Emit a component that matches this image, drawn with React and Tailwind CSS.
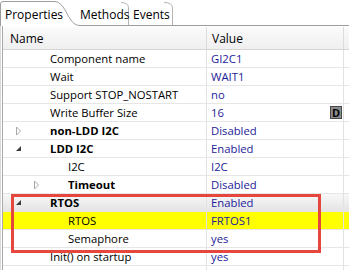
import React from 'react';

const rows = [
  { name: 'Component name', value: 'GI2C1', depth: 0 },
  { name: 'Wait', value: 'WAIT1', depth: 0 },
  { name: 'Support STOP_NOSTART', value: 'no', depth: 0 },
  { name: 'Write Buffer Size', value: '16', depth: 0, button: 'D' },
  { name: 'non-LDD I2C', value: 'Disabled', depth: 0, group: 'closed' },
  { name: 'LDD I2C', value: 'Enabled', depth: 0, group: 'open' },
  { name: 'I2C', value: 'I2C', depth: 1 },
  { name: 'Timeout', value: 'Disabled', depth: 1, group: 'closed' },
  { name: 'RTOS', value: 'Enabled', depth: 0, group: 'open', shade: true },
  { name: 'RTOS', value: 'FRTOS1', depth: 1, highlight: true },
  { name: 'Semaphore', value: 'yes', depth: 1 },
  { name: 'Init() on startup', value: 'yes', depth: 0 },
  { name: '', value: '', depth: 0 },
];

function Toggle({ state }) {
  if (state === 'open') {
    return (
      <svg width="7" height="7" viewBox="0 0 7 7">
        <path d="M6 1 L6 6 L1 6 Z" fill="#3c3c3c" />
      </svg>
    );
  }
  return (
    <svg width="7" height="10" viewBox="0 0 7 10">
      <path d="M1.5 1 L5.5 5 L1.5 9 Z" fill="none" stroke="#a8a8a8" strokeWidth="1" />
    </svg>
  );
}

function Row({ row }) {
  const indent = 47 + row.depth * 18;
  let bg = 'bg-white';
  if (row.highlight) bg = 'bg-[#ffff00]';
  if (row.shade) bg = 'bg-gradient-to-b from-[#f8f8f8] to-[#e4e4e4]';

  return (
    <div className={`flex h-[18px] border-b border-[#e6e6e6] ${bg}`}>
      <div className="w-[204px] shrink-0 border-r border-[#e2e2e2] relative flex items-center overflow-hidden">
        {row.group && (
          <span
            className="absolute top-0 h-full flex items-center"
            style={{ left: indent - 35 }}
          >
            <Toggle state={row.group} />
          </span>
        )}
        <span
          className={`whitespace-nowrap text-black ${row.group ? 'font-bold' : ''}`}
          style={{ paddingLeft: indent }}
        >
          {row.name}
        </span>
      </div>
      <div className="w-[137px] shrink-0 border-r border-[#e2e2e2] flex items-center justify-between pl-[4px] pr-[1px]">
        <span className="text-[#1d1b9a] whitespace-nowrap">{row.value}</span>
        {row.button && (
          <span className="w-[12px] h-[13px] bg-[#8c8c8c] border border-[#4a4a4a] flex items-center justify-center text-[11px] font-bold text-black leading-none">
            {row.button}
          </span>
        )}
      </div>
    </div>
  );
}

export default function App() {
  return (
    <div className="w-[349px] h-[270px] bg-white relative overflow-hidden text-[11.3px] leading-none font-['Segoe_UI','Open_Sans','Noto_Sans',sans-serif]">
      {/* Tabs */}
      <div className="relative h-[26px]">
        <svg className="absolute inset-0" width="349" height="26" viewBox="0 0 349 26">
          <path
            d="M0.5 26 L0.5 4 Q0.5 1.5 3 1.5 L54 1.5 C67 1.5 67 25.5 80 25.5 L349 25.5"
            fill="none"
            stroke="#9c9c9c"
          />
          <path d="M121 2.5 Q128.5 2.5 128.5 8 L128.5 25" fill="none" stroke="#b4b4b4" />
          <path d="M164 2.5 Q172.5 2.5 172.5 8 L172.5 25" fill="none" stroke="#b4b4b4" />
        </svg>
        <div className="relative grid grid-cols-[80px_53px_auto] h-full items-center pt-[4px] text-black text-[12px]">
          <span className="pl-[5px]">Properties</span>
          <span>Methods</span>
          <span>Events</span>
        </div>
      </div>

      {/* Table */}
      <div className="border-l border-[#dadada] h-[244px]">
        <div className="ml-[1px] border-l border-[#a9a9a9] h-full pt-[1px]">
          <div className="flex h-[23px] border-b border-[#d6d6d6] bg-gradient-to-b from-[#fbfbfb] to-[#efefef]">
            <div className="w-[204px] shrink-0 border-r border-[#dcdcdc] flex items-center pl-[7px] pt-[2px] text-[12px]">
              Name
            </div>
            <div className="w-[137px] shrink-0 border-r border-[#dcdcdc] flex items-center pl-[5px] pt-[2px] text-[12px]">
              Value
            </div>
          </div>
          {rows.map((r, i) => (
            <Row key={i} row={r} />
          ))}
        </div>
      </div>

      {/* Highlight box */}
      <div className="absolute left-[11px] top-[194px] w-[310px] h-[59px] border-[3px] border-[#e5463e] pointer-events-none" />
    </div>
  );
}
